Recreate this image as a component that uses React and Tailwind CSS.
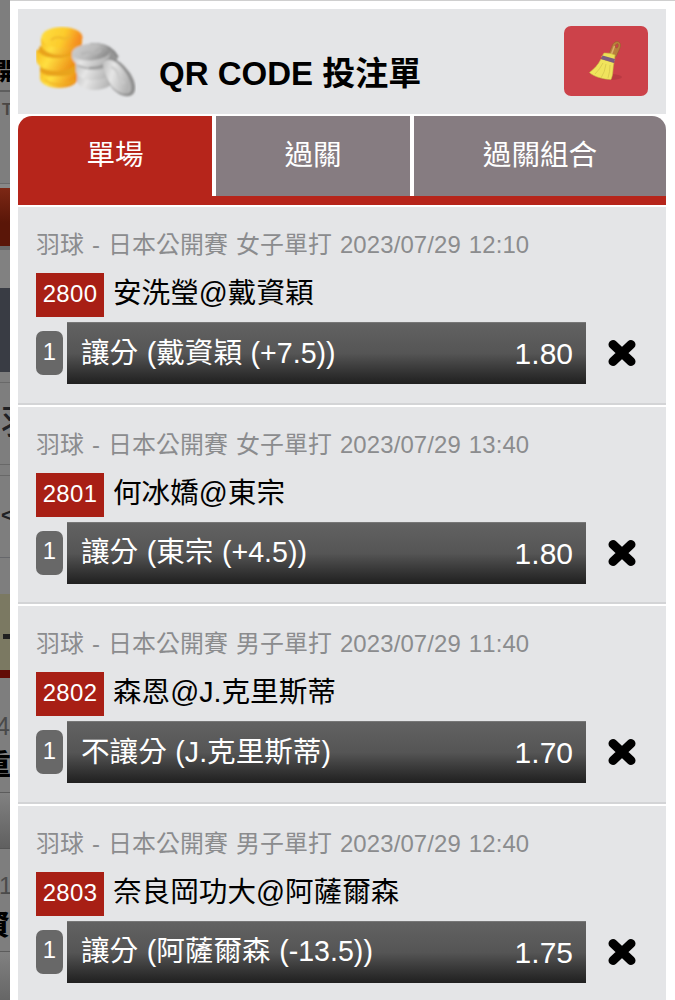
import clsx from 'clsx';

const TABS = [
  { id: 'single', label: '單場', width: 'w-[194px]', corner: 'rounded-tl-[14px]' },
  { id: 'parlay', label: '過關', width: 'w-[194px]', corner: '' },
  { id: 'combo', label: '過關組合', width: 'flex-1', corner: 'rounded-tr-[14px]' },
];

const BETS = [
  {
    id: '2800',
    league: '羽球 - 日本公開賽 女子單打 2023/07/29 12:10',
    match: '安洗瑩@戴資穎',
    pick: '讓分 (戴資穎 (+7.5))',
    odds: '1.80',
  },
  {
    id: '2801',
    league: '羽球 - 日本公開賽 女子單打 2023/07/29 13:40',
    match: '何冰嬌@東宗',
    pick: '讓分 (東宗 (+4.5))',
    odds: '1.80',
  },
  {
    id: '2802',
    league: '羽球 - 日本公開賽 男子單打 2023/07/29 11:40',
    match: '森恩@J.克里斯蒂',
    pick: '不讓分 (J.克里斯蒂)',
    odds: '1.70',
  },
  {
    id: '2803',
    league: '羽球 - 日本公開賽 男子單打 2023/07/29 12:40',
    match: '奈良岡功大@阿薩爾森',
    pick: '讓分 (阿薩爾森 (-13.5))',
    odds: '1.75',
  },
];

function Coins() {
  return (
    <svg width="100" height="72" viewBox="0 0 100 72" fill="none">
      <defs>
        <linearGradient id="gold" x1="0" y1="0" x2="1" y2="0.3">
          <stop offset="0" stopColor="#f8bc20" />
          <stop offset="0.4" stopColor="#ffdf40" />
          <stop offset="1" stopColor="#ee9016" />
        </linearGradient>
        <linearGradient id="goldTop" x1="0" y1="0" x2="1" y2="0.2">
          <stop offset="0" stopColor="#ffdf40" />
          <stop offset="0.6" stopColor="#fccb2c" />
          <stop offset="1" stopColor="#f58c20" />
        </linearGradient>
        <linearGradient id="silver" x1="0" y1="0" x2="1" y2="0.3">
          <stop offset="0" stopColor="#bdbdbd" />
          <stop offset="0.4" stopColor="#e6e6e6" />
          <stop offset="1" stopColor="#b4b4b4" />
        </linearGradient>
        <linearGradient id="silverTop" x1="0" y1="0" x2="1" y2="0.5">
          <stop offset="0" stopColor="#cfcfcf" />
          <stop offset="0.6" stopColor="#bcbcbc" />
          <stop offset="1" stopColor="#8e8e8e" />
        </linearGradient>
        <filter id="soft" x="-10%" y="-10%" width="120%" height="120%">
          <feGaussianBlur stdDeviation="0.8" />
        </filter>
      </defs>
      <g filter="url(#soft)">
        {/* gold stack */}
        <path d="M4 42v10c0 6 9 10 19 10s19-4 19-10V42z" fill="url(#gold)" />
        <path d="M4 45c5 5 10 5 18 5s14-1 19-5v-6H4z" fill="#e8a31a" />
        <path d="M0 24v9c0 7 9 12 20 12s22-5 22-12v-9z" fill="url(#gold)" />
        <path d="M2 25c5 6 11 7 19 7s15-2 19-7v-5H4z" fill="#e8a31a" />
        <path d="M5 12v6c0 6 9 11 20 11s21-5 21-11v-6z" fill="url(#gold)" />
        <ellipse cx="26" cy="11.500" rx="20.500" ry="10.500" fill="url(#goldTop)" />
        <path d="M15 14q5-4 11-2t9-3" stroke="#efb82c" strokeWidth="2" />
        <path d="M9 54c8 6 22 6 30 0" stroke="#eeb025" strokeWidth="1.500" />
        {/* silver stack */}
        <path d="M41 45v11c3 6 10 8 18 8s17-4 19-9l-3-12z" fill="url(#silver)" />
        <path d="M40 37v9c2 6 9 8 18 8s18-4 19-9V35z" fill="url(#silver)" />
        <path d="M42 39c8 5 26 5 32 0" stroke="#a9a9a9" strokeWidth="2" />
        <path d="M54 17c14-1 23 6 28 14l-3 9-26 3z" fill="#949494" />
        <path d="M62 18c9 1 16 5 20 13" stroke="#777" strokeWidth="1.500" />
        <path d="M36 26v6c2 6 9 9 18 9s16-3 19-9l1-6z" fill="url(#silver)" />
        <ellipse cx="55" cy="26" rx="19" ry="8.500" transform="rotate(-4 55 26)" fill="url(#silverTop)" />
        <path d="M45 28q6-3 11-1t9-3" stroke="#b5b5b5" strokeWidth="2" />
        {/* leaning silver coin */}
        <path d="M69 34c8-5 18 3 25 13 6 9 7 19 2 22-7 4-18-2-23-12-4-7-7-19-4-23z" fill="#8e8e8e" />
        <path d="M68 35c7-4 16 3 22 12 6 9 7 18 3 20-6 3-15-2-20-11-4-7-8-18-5-21z" fill="url(#silver)" />
        <path d="M75 41q6 2 7 8t7 8" stroke="#c9c9c9" strokeWidth="2" />
      </g>
    </svg>
  );
}

function Broom() {
  return (
    <svg width="34" height="42" viewBox="0 0 34 42" fill="none">
      <ellipse cx="21" cy="37" rx="12" ry="3" fill="#a02f37" fillOpacity="0.4" />
      <path
        fillRule="evenodd"
        d="M19.500 15l3.500-9c2-6 9-6 8.500 0C31 9 29 12 27 17z M27 4.500c-1.300 1.700-.7 3.500.5 3.500s2.200-2.200 1.700-3.500-1.500-.9-2.200 0z"
        fill="#b9803c"
        stroke="#96602c"
        strokeWidth="0.600"
      />
      <path d="M22.500 14l3-8" stroke="#dbae68" strokeWidth="1.500" />
      <path d="M15 13q6-.5 11 2l-.5 6-13-4z" fill="#ece057" stroke="#c9b340" strokeWidth="0.600" />
      <path d="M12 19C9 25 5 29 .5 32.500c4 4 14 7 21.500 7 2.500-5 1.500-11 3-17z" fill="#f0e35c" stroke="#cbb948" strokeWidth="0.600" />
      <path d="M13.500 15.500l12.500 3.500-1 4-13-4z" fill="#7c5c80" />
      <path d="M14 23q-3 6-8 11M17 24q-1 8-5 14M21 25q0 7-2 13" stroke="#dccd50" />
    </svg>
  );
}

function RemoveIcon() {
  return (
    <svg width="30" height="30" viewBox="0 0 30 30">
      <path d="M6 6.500l18 17M24 6.500L6 23.500" stroke="#000" strokeWidth="9" strokeLinecap="round" strokeLinejoin="round" />
      <path d="M9 15l6-6 6 6-6 6z" fill="#000" />
    </svg>
  );
}

// Dimmed page that stays visible beside the bet slip
function PageBehind() {
  return (
    <div className="flex w-[10px] shrink-0 flex-col overflow-hidden bg-[#7e7e7e] leading-none text-[#202124]">
      <div className="h-[92px] shrink-0 overflow-hidden border-b-2 border-[#5e5e5e] pt-[60px]">
        <span className="-ml-[6px] block w-8 text-[24px] font-black text-black">開</span>
      </div>
      <div className="h-[92px] shrink-0 border-b border-[#6a6a6a] pt-[9px]">
        <span className="ml-[2px] block w-6 text-[17px] font-bold text-[#4b4745]">T</span>
      </div>
      <div className="h-[4px] shrink-0 bg-[#888888]" />
      <div className="h-[58px] shrink-0 bg-linear-to-b from-[#7d2815] to-[#5a1608] to-60%" />
      <div className="h-[42px] shrink-0 border-t-4 border-[#696969] bg-[#818181]" />
      <div className="h-[84px] shrink-0 bg-[#393c44]" />
      <div className="h-[11px] shrink-0 border-b border-[#696969]" />
      <div className="h-[82px] shrink-0 border-b border-[#686868] pt-[22px]">
        <span className="ml-px block w-9 text-[34px] font-medium">羽</span>
      </div>
      <div className="h-[11px] shrink-0 border-b border-[#686868]" />
      <div className="h-[82px] shrink-0 border-b border-[#66676b] pt-[28px]">
        <span className="ml-px block w-5 text-[21px] font-bold">&lt;</span>
      </div>
      <div className="h-[36px] shrink-0" />
      <div className="h-[76px] shrink-0 bg-[#7b7962] pt-[40px]">
        <div className="ml-[3px] h-[5px] bg-[#202020]" />
      </div>
      <div className="h-[8px] shrink-0 bg-[#620c06]" />
      <div className="h-[115px] shrink-0 border-b border-[#5c5c5c] pt-[36px]">
        <span className="-ml-[4px] block w-6 text-[25px] text-[#494949]">4</span>
        <span className="-ml-[17px] mt-[13px] block w-8 text-[28px] font-black text-black">重</span>
      </div>
      <div className="h-[56px] shrink-0 border-b border-[#565656] bg-linear-to-b from-[#818181] to-[#606060]" />
      <div className="h-[103px] shrink-0 border-b border-[#5c5c5c] pt-[25px]">
        <span className="-ml-px block w-6 text-[24px] text-[#4b4b4b]">1</span>
        <span className="-ml-[18px] mt-[14px] block w-8 text-[28px] font-black text-black">資</span>
      </div>
      <div className="flex-1 bg-linear-to-b from-[#818181] to-[#666666]" />
    </div>
  );
}

function BetCard({ bet }) {
  return (
    <li className="h-[199.6px] shrink-0 border-b-2 border-white">
      <div className="h-full border-b-2 border-[#d3d4d6] bg-[#e4e5e7] pl-[18px]">
        <p className="pt-[22px] text-[23.9px] leading-[32px] tracking-[0.14px] [word-spacing:1.1px] whitespace-nowrap text-[#8b8c8e]">
          {bet.league}
        </p>
        <div className="mt-[12px] flex h-[44px] items-start">
          <span className="flex h-full w-[68px] items-center justify-center bg-[#a81f15] pb-[2px] text-[23.9px] tracking-[0.4px] text-white">
            {bet.id}
          </span>
          <span className="ml-[9px] pt-px text-[28.6px] leading-[38px] whitespace-nowrap text-black">{bet.match}</span>
        </div>
        <div className="mt-[5px] flex h-[62px] items-center">
          <span className="flex h-[44px] w-[27px] items-center justify-center rounded-[7px] bg-[#686868] pb-[3px] text-[23.9px] text-white">
            1
          </span>
          <div className="ml-[4px] flex h-full w-[519px] items-center justify-between border-t border-[#777777] bg-linear-to-b from-[#626262] via-[#555555] via-50% to-[#202020] pr-[13px] pl-[14px] text-white">
            <span className="pb-[2px] text-[28.6px] leading-[38px] [word-spacing:0.6px] whitespace-nowrap">{bet.pick}</span>
            <span className="pt-px text-[30px] leading-[38px]">{bet.odds}</span>
          </div>
          <button className="ml-[21px]" aria-label="刪除">
            <RemoveIcon />
          </button>
        </div>
      </div>
    </li>
  );
}

export default function App() {
  return (
    <div className="flex h-[1000px] w-[675px] overflow-hidden bg-white font-['Liberation_Sans','Noto_Sans_CJK_TC',sans-serif] [font-kerning:none]">
      <PageBehind />

      <main className="flex min-w-0 flex-1 flex-col border-t border-[#cfcfcf] pt-[8px] pr-[9px] pl-[8px]">
        {/* Header */}
        <header className="flex h-[105px] shrink-0 items-start bg-[#e4e5e7] pt-[17px] pr-[18px] pl-[18px]">
          <Coins />
          <h1 className="mt-[28px] ml-[23px] text-[33px] leading-[40px] font-bold whitespace-nowrap text-black">
            QR CODE 投注單
          </h1>
          <button
            className="ml-auto flex h-[70px] w-[84px] items-center justify-center rounded-[7px] bg-[#cc424a]"
            aria-label="清除"
          >
            <Broom />
          </button>
        </header>

        {/* Tabs */}
        <nav className="mt-[2px] flex h-[89px] shrink-0 gap-[4px] border-b-[9px] border-[#b6251b]">
          {TABS.map((tab) => (
            <button
              key={tab.id}
              className={clsx(
                'pb-[2px] text-[28.6px] text-white',
                tab.width,
                tab.corner,
                tab.id === 'single' ? 'bg-[#b6251b]' : 'bg-[#867c81]'
              )}
            >
              {tab.label}
            </button>
          ))}
        </nav>

        {/* Bets */}
        <ul className="mt-[2px] flex flex-col">
          {BETS.map((bet) => (
            <BetCard key={bet.id} bet={bet} />
          ))}
        </ul>
      </main>
    </div>
  );
}
